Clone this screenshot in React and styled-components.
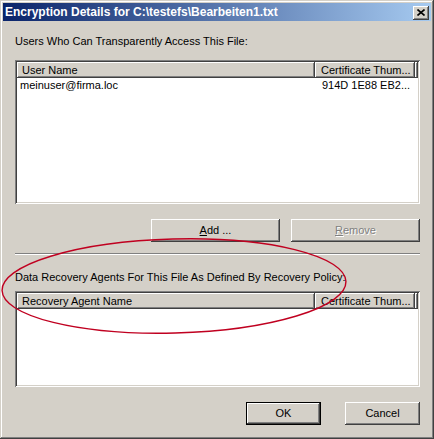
import React from 'react';
import styled, { createGlobalStyle } from 'styled-components';

const GlobalStyle = createGlobalStyle`
  html, body {
    margin: 0;
    padding: 0;
    background: #d4d0c8;
  }
  * {
    box-sizing: border-box;
  }
`;

const Window = styled.div`
  position: relative;
  width: 434px;
  height: 439px;
  padding: 3px;
  background: #d4d0c8;
  font-family: 'Liberation Sans', Arial, sans-serif;
  font-size: 11px;
  color: #000;
  box-shadow: inset -1px -1px #404040, inset 1px 1px #d4d0c8,
    inset -2px -2px #808080, inset 2px 2px #ffffff;
  display: flex;
  flex-direction: column;
  overflow: hidden;
`;

const TitleBar = styled.div`
  height: 18px;
  display: flex;
  align-items: center;
  justify-content: space-between;
  padding: 0 2px 0 2px;
  background: linear-gradient(to right, #0a246a, #a6caf0);
`;

const Title = styled.span`
  color: #fff;
  font-weight: bold;
  font-size: 12px;
  line-height: 18px;
  white-space: nowrap;
`;

const CloseButton = styled.div`
  width: 16px;
  height: 14px;
  margin-top: 1px;
  display: flex;
  align-items: center;
  justify-content: center;
  background: #d4d0c8;
  box-shadow: inset -1px -1px #404040, inset 1px 1px #ffffff,
    inset -2px -2px #808080, inset 2px 2px #d4d0c8;
`;

const Body = styled.div`
  flex: 1;
  display: flex;
  flex-direction: column;
  padding: 0 11px 0 12px;
`;

const Label = styled.div`
  margin-top: ${(p) => p.$top}px;
  height: 13px;
  line-height: 13px;
  white-space: nowrap;
`;

const ListView = styled.div`
  margin-top: ${(p) => p.$top}px;
  height: ${(p) => p.$height}px;
  padding: 2px;
  background: #fff;
  box-shadow: inset 1px 1px #808080, inset -1px -1px #ffffff,
    inset 2px 2px #404040, inset -2px -2px #d4d0c8;
  display: flex;
  flex-direction: column;
`;

const HeaderRow = styled.div`
  display: flex;
  height: 16px;
  flex-shrink: 0;
`;

const HeaderCell = styled.div`
  width: ${(p) => p.$width}px;
  flex: ${(p) => (p.$grow ? 1 : 'none')};
  padding-left: ${(p) => p.$indent}px;
  line-height: 16px;
  white-space: nowrap;
  overflow: hidden;
  background: #d4d0c8;
  box-shadow: inset -1px -1px #404040, inset 1px 1px #ffffff,
    inset -2px -2px #808080;
`;

const Row = styled.div`
  display: flex;
  height: 14px;
  padding-top: 1px;
`;

const Cell = styled.div`
  width: ${(p) => p.$width}px;
  padding-left: ${(p) => p.$indent}px;
  line-height: 13px;
  white-space: nowrap;
  overflow: hidden;
`;

const ButtonRow = styled.div`
  margin-top: ${(p) => p.$top}px;
  display: flex;
  justify-content: flex-end;
  gap: ${(p) => p.$gap}px;
`;

const Button = styled.div`
  width: ${(p) => p.$width}px;
  height: 23px;
  display: flex;
  align-items: center;
  justify-content: center;
  line-height: 13px;
  background: #d4d0c8;
  color: ${(p) => (p.$disabled ? '#808080' : '#000')};
  text-shadow: ${(p) => (p.$disabled ? '1px 1px #ffffff' : 'none')};
  box-shadow: ${(p) =>
    p.$default
      ? 'inset 0 0 0 1px #000, inset -2px -2px #404040, inset 2px 2px #ffffff, inset -3px -3px #808080'
      : 'inset -1px -1px #404040, inset 1px 1px #ffffff, inset -2px -2px #808080, inset 2px 2px #d4d0c8'};
`;

const Key = styled.span`
  text-decoration: underline;
`;

const Separator = styled.div`
  margin-top: ${(p) => p.$top}px;
  height: 2px;
  border-top: 1px solid #808080;
  border-bottom: 1px solid #ffffff;
`;

const Annotation = styled.svg`
  position: absolute;
  left: 0;
  top: 230px;
  pointer-events: none;
`;

const CloseIcon = () => (
  <svg width="8" height="7" viewBox="0 0 8 7">
    <path d="M0.5 0.5 L7.5 6.5 M7.5 0.5 L0.5 6.5" stroke="#000" strokeWidth="1.6" fill="none" />
  </svg>
);

export default function App() {
  return (
    <>
      <GlobalStyle />
      <Window>
        <TitleBar>
          <Title>Encryption Details for C:\testefs\Bearbeiten1.txt</Title>
          <CloseButton>
            <CloseIcon />
          </CloseButton>
        </TitleBar>
        <Body>
          <Label $top={14}>Users Who Can Transparently Access This File:</Label>
          <ListView $top={12} $height={144}>
            <HeaderRow>
              <HeaderCell $width={298} $indent={5}>User Name</HeaderCell>
              <HeaderCell $width={100} $indent={6}>Certificate Thum...</HeaderCell>
              <HeaderCell $grow />
            </HeaderRow>
            <Row>
              <Cell $width={298} $indent={3}>meinuser@firma.loc</Cell>
              <Cell $width={100} $indent={7}>914D 1E88 EB2...</Cell>
            </Row>
          </ListView>
          <ButtonRow $top={15} $gap={11}>
            <Button $width={129}>
              <span><Key>A</Key>dd ...</span>
            </Button>
            <Button $width={129} $disabled>
              <span><Key>R</Key>emove</span>
            </Button>
          </ButtonRow>
          <Separator $top={11} />
          <Label $top={16}>Data Recovery Agents For This File As Defined By Recovery Policy:</Label>
          <ListView $top={7} $height={96}>
            <HeaderRow>
              <HeaderCell $width={298} $indent={5}>Recovery Agent Name</HeaderCell>
              <HeaderCell $width={100} $indent={6}>Certificate Thum...</HeaderCell>
              <HeaderCell $grow />
            </HeaderRow>
          </ListView>
          <ButtonRow $top={15} $gap={24}>
            <Button $width={75} $default>OK</Button>
            <Button $width={75}>Cancel</Button>
          </ButtonRow>
        </Body>
        <Annotation width="360" height="120" viewBox="0 0 360 120">
          <ellipse
            cx="174"
            cy="56"
            rx="172"
            ry="47"
            transform="rotate(-1.5 174 56)"
            fill="none"
            stroke="#c00020"
            strokeWidth="1.4"
          />
        </Annotation>
      </Window>
    </>
  );
}
